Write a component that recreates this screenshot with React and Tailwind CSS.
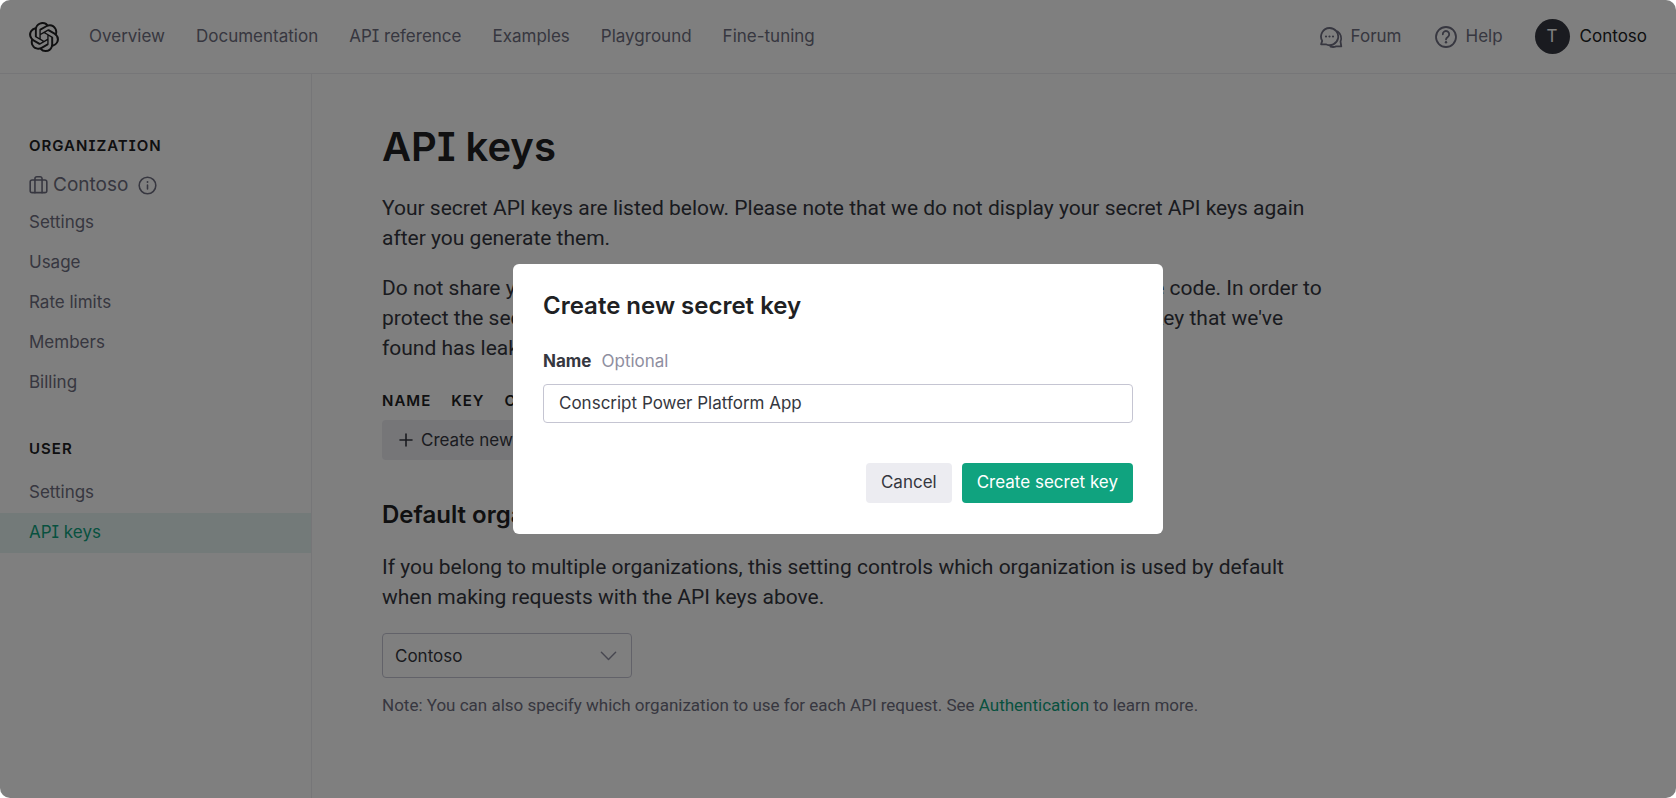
import { useState } from 'react'
import { SiOpenai } from 'react-icons/si'

const navLinks = ['Overview', 'Documentation', 'API reference', 'Examples', 'Playground', 'Fine-tuning']
const orgLinks = ['Settings', 'Usage', 'Rate limits', 'Members', 'Billing']
const userLinks = ['Settings', 'API keys']

function Icon({ className, children, width = 1.8 }) {
  return (
    <svg viewBox="0 0 24 24" className={className} fill="none" stroke="currentColor" strokeWidth={width} strokeLinecap="round" strokeLinejoin="round" aria-hidden="true">
      {children}
    </svg>
  )
}

function ForumIcon() {
  return (
    <Icon className="size-6">
      <path d="M10.5 3a8.6 8.6 0 1 1-3.7 16.3H2.1l1.1-3.4A8.6 8.6 0 0 1 10.5 3z" />
      <path d="M18.6 6.4a8.6 8.6 0 0 1 2.9 10.2l.8 4.8h-5.200a8.600 8.600 0 0 1-5.600.2" />
      <path d="M7 11.5h.01M10.5 11.5h.01M14 11.5h.01" strokeWidth="2.2" />
    </Icon>
  )
}

function HelpIcon() {
  return (
    <Icon className="size-6">
      <circle cx="12" cy="12" r="10" />
      <path d="M8.8 9.3a3.2 3.2 0 1 1 5 2.6c-1.2.8-1.8 1.3-1.8 2.5" />
      <path d="M12 17.3h.01" strokeWidth="2.4" />
    </Icon>
  )
}

function Header() {
  return (
    <header className="flex items-center justify-between h-[74px] px-[29px] border-b border-[#ececf1] text-[17px] text-[#6e6e80]">
      <div className="flex items-center gap-[30px]">
        <a href="#home" aria-label="Home" className="text-[#202123]">
          <SiOpenai className="size-[30px]" />
        </a>
        <nav className="flex gap-[31px]">
          {navLinks.map(label => (
            <a key={label} href="#nav">{label}</a>
          ))}
        </nav>
      </div>
      <div className="flex items-center gap-[32px]">
        <a href="#forum" className="flex items-center gap-2"><ForumIcon />Forum</a>
        <a href="#help" className="flex items-center gap-2"><HelpIcon />Help</a>
        <button className="flex items-center gap-[10px] text-[#202123]">
          <span className="flex items-center justify-center size-[35px] rounded-full bg-[#353740] text-white">T</span>
          Contoso
        </button>
      </div>
    </header>
  )
}

function SideHeading({ children }) {
  return <h2 className="px-[29px] text-[15px] leading-5 font-semibold tracking-[1px] uppercase text-[#202123]">{children}</h2>
}

function SideLink({ label, active }) {
  return (
    <a href="#side" className={'flex items-center h-10 px-[29px] ' + (active ? 'bg-[#e6f5f3] text-[#10a37f]' : '')}>{label}</a>
  )
}

function Sidebar() {
  return (
    <aside className="w-[312px] shrink-0 pt-[62px] border-r border-[#ececf1] text-[17px] text-[#6e6e80]">
      <SideHeading>Organization</SideHeading>
      <div className="flex items-center h-6 mt-[17px] mb-[6px] px-[29px] text-[19px]">
        <Icon className="size-[19px] mr-[5px]" width={2}>
          <rect x="1.5" y="5" width="21" height="16" rx="2.5" />
          <path d="M7.5 21V3.500a2.500 2.500 0 0 1 2.500-2.500h4a2.500 2.500 0 0 1 2.500 2.500V21" />
        </Icon>
        Contoso
        <Icon className="size-[19px] ml-[10px]" width={2}>
          <circle cx="12" cy="12" r="10.500" />
          <path d="M12 11.500v5" />
          <path d="M12 7.500h.01" strokeWidth="2.400" />
        </Icon>
      </div>
      {orgLinks.map(label => <SideLink key={label} label={label} />)}
      <div className="mt-9 mb-[14px]">
        <SideHeading>User</SideHeading>
      </div>
      {userLinks.map(label => <SideLink key={label} label={label} active={label === 'API keys'} />)}
    </aside>
  )
}

// body copy is set in Roboto, interface text in Inter
function Prose({ className, children }) {
  return <p className={"font-['Roboto',sans-serif] " + className}>{children}</p>
}

function KeysPage() {
  return (
    <main className="flex-1 pt-[48px] px-[70px] text-[21px] leading-[30px] text-[#353740]">
      <div className="max-w-[940px]">
        <h1 className="text-[40px] leading-[50px] font-semibold text-[#202123]">API keys</h1>
        <Prose className="mt-[21px]">
          Your secret API keys are listed below. Please note that we do not display your secret API keys again after you generate them.
        </Prose>
        <Prose className="mt-5">
          Do not share your API key with others, or expose it in the browser or other client-side code. In order to protect the security of your account, OpenAI may also automatically rotate any API key that we've found has leaked publicly.
        </Prose>
        <table className="mt-7 text-[15px] leading-5 tracking-[1px] uppercase text-left text-[#202123]">
          <thead>
            <tr>
              <th className="pr-5 font-semibold">Name</th>
              <th className="pr-5 font-semibold">Key</th>
              <th className="pr-5 font-semibold">Created</th>
              <th className="pr-5 font-semibold">Last used</th>
            </tr>
          </thead>
        </table>
        <button className="flex items-center gap-[7px] h-10 mt-[9px] px-4 rounded-[4px] bg-[#ececf1] text-[17px]">
          <Icon className="size-[16px]" width={2.4}><path d="M12 3v18M3 12h18" /></Icon>
          Create new secret key
        </button>
        <h2 className="mt-10 text-[24px] leading-[30px] font-semibold text-[#202123]">Default organization</h2>
        <Prose className="mt-[22px]">
          If you belong to multiple organizations, this setting controls which organization is used by default when making requests with the API keys above.
        </Prose>
        <div className="relative w-[250px] mt-[21px]">
          <select aria-label="Default organization" className="appearance-none w-full h-[45px] px-3 rounded-[4px] border border-[#c5c5d2] bg-white text-[17px]">
            <option>Contoso</option>
          </select>
          <Icon className="absolute right-[14px] top-[13px] size-[19px] text-[#8e8ea0] pointer-events-none"><path d="M3 8l9 9 9-9" /></Icon>
        </div>
        <Prose className="mt-3 text-[17px] text-[#6e6e80]">
          Note: You can also specify which organization to use for each API request. See <a href="#auth" className="text-[#10a37f]">Authentication</a> to learn more.
        </Prose>
      </div>
    </main>
  )
}

function CreateKeyModal() {
  const [name, setName] = useState('Conscript Power Platform App')

  return (
    <div className="fixed inset-0 flex items-center justify-center rounded-[10px] bg-black/50">
      <div role="dialog" aria-labelledby="modal-title" className="w-[650px] px-[30px] pt-[30px] pb-[31px] rounded-[6px] bg-white text-[17px] text-[#353740]">
        <h2 id="modal-title" className="text-[24px] leading-6 font-semibold text-[#202123]">Create new secret key</h2>
        <label htmlFor="key-name" className="flex gap-[10px] mt-[31px] leading-6">
          <span className="font-bold">Name</span>
          <span className="text-[#8e8ea0]">Optional</span>
        </label>
        <input
          id="key-name"
          type="text"
          value={name}
          onChange={e => setName(e.target.value)}
          className="w-full h-[39px] mt-[11px] px-[15px] pb-[2px] rounded-[4px] border border-[#c5c5d2] focus:outline-none"
        />
        <div className="flex justify-end gap-[10px] mt-10">
          <button className="h-10 px-[15px] rounded-[4px] bg-[#ececf1]">Cancel</button>
          <button className="h-10 px-[15px] rounded-[4px] bg-[#10a37f] text-white">Create secret key</button>
        </div>
      </div>
    </div>
  )
}

export default function App() {
  return (
    <div className="flex flex-col min-h-screen rounded-[10px] bg-white font-['Inter',sans-serif] [font-feature-settings:'cv08']">
      <Header />
      <div className="flex flex-1">
        <Sidebar />
        <KeysPage />
      </div>
      <CreateKeyModal />
    </div>
  )
}
